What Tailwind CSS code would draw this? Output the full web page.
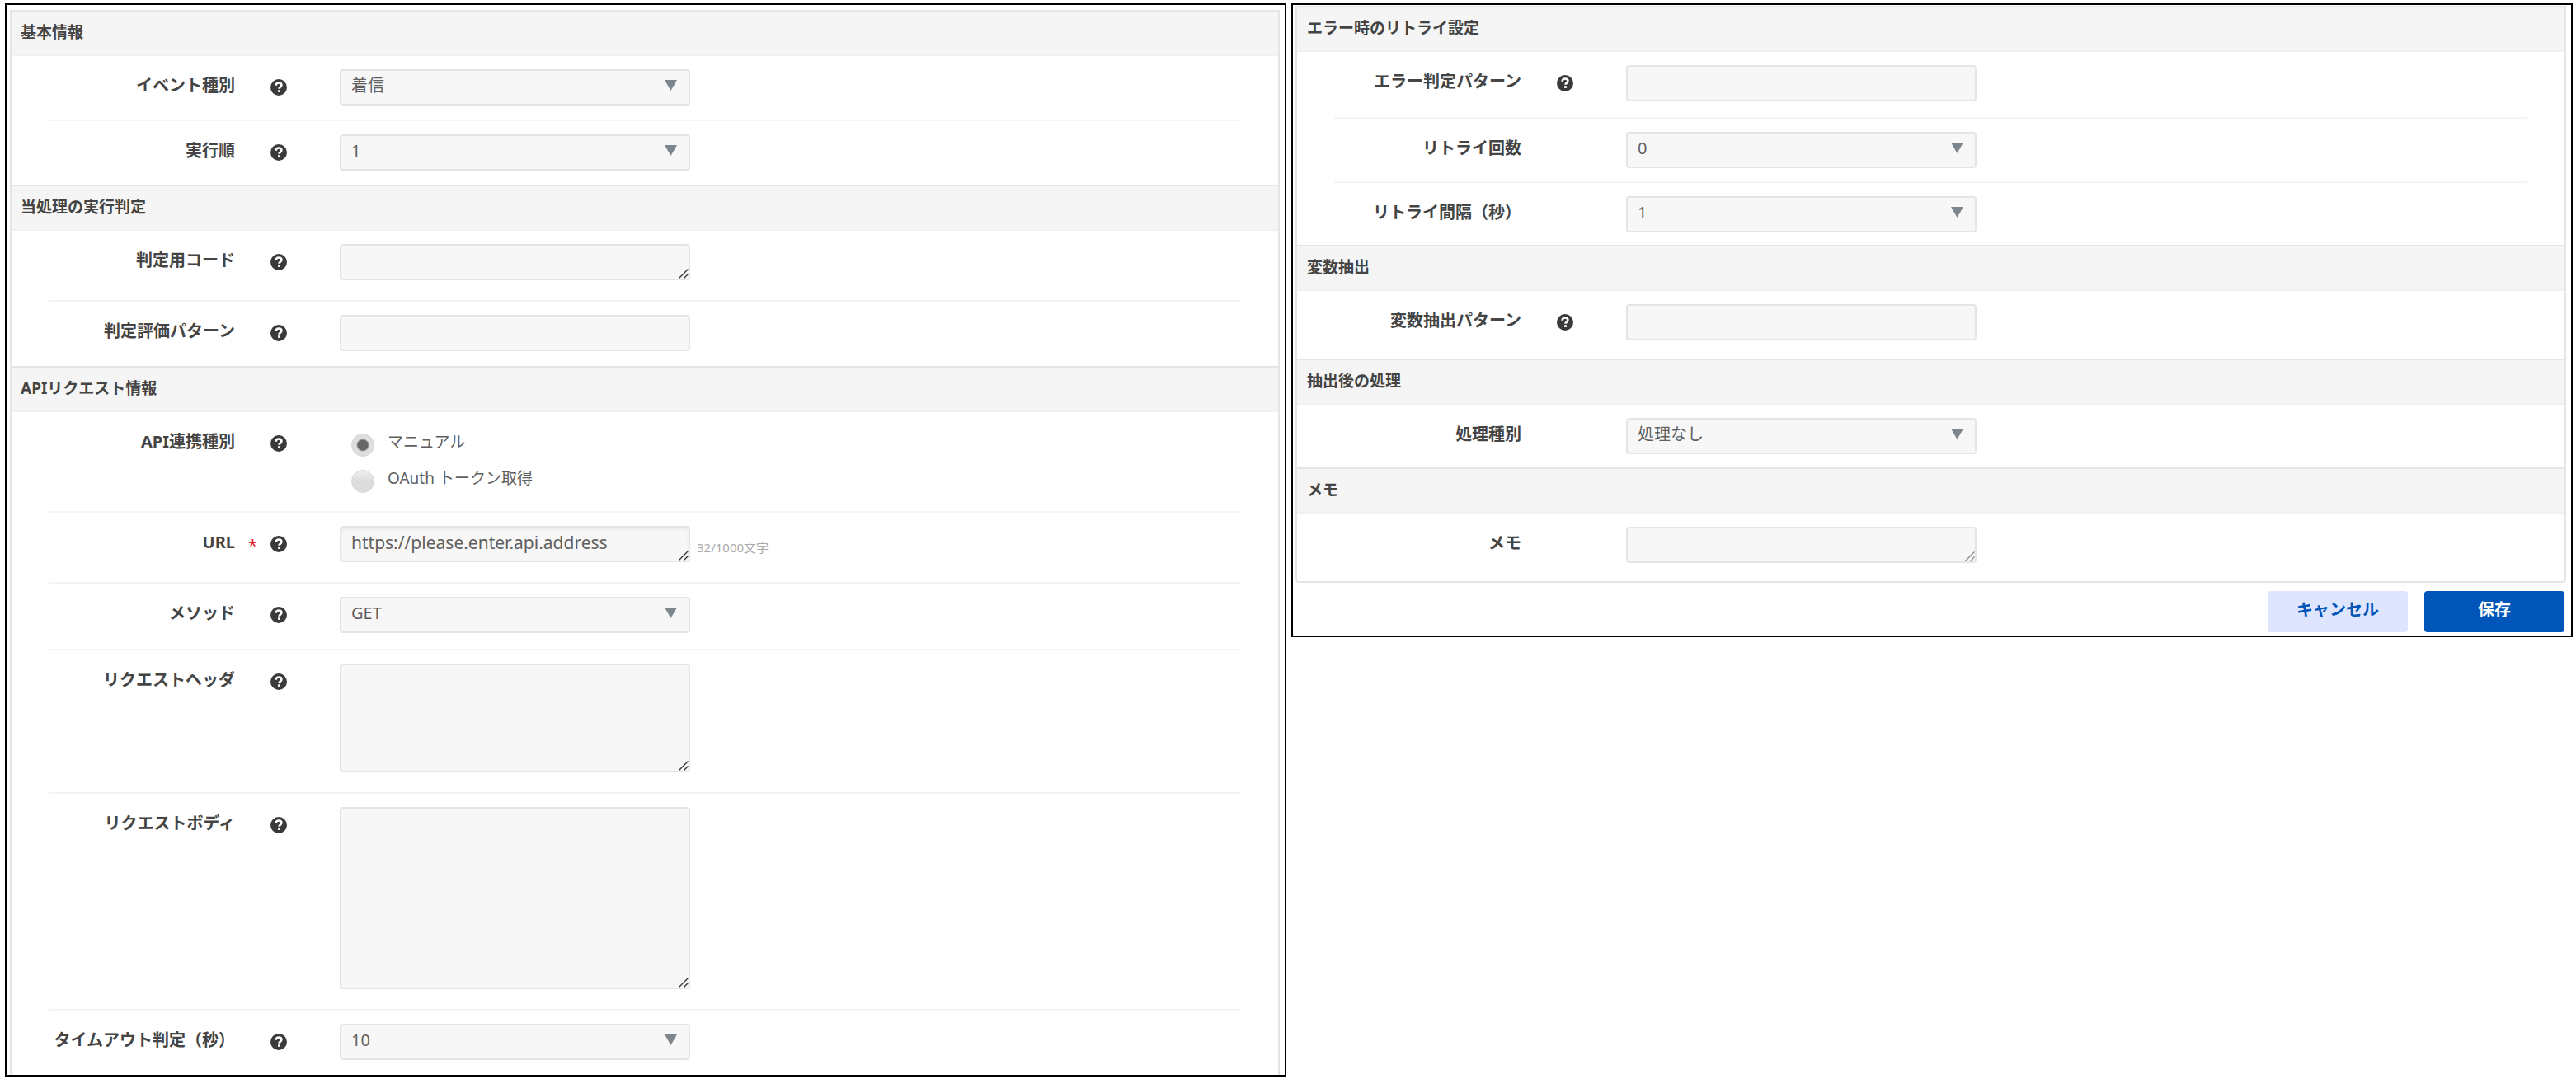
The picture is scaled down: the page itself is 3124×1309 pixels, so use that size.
<!DOCTYPE html>
<html lang="ja">
<head>
    <meta charset="UTF-8">
    <meta name="viewport" content="width=device-width, initial-scale=1.0">
    <title>API連携設定</title>
    <script src="https://cdn.jsdelivr.net/npm/@tailwindcss/browser@4"></script>
</head>
<body class="bg-white font-['Noto_Sans','Noto_Sans_CJK_JP',sans-serif] text-[20px] text-[#5f5f5f]">
    <!-- Shared icons -->
    <svg class="hidden">
        <symbol id="help" viewBox="0 0 20 20">
            <circle cx="10" cy="10" r="10" fill="#3a3a3a"/>
            <path d="M6.600 7.800C6.700 5.500 8.100 4.500 10.100 4.500c2 0 3.300 1.100 3.300 2.800 0 2.300-2.900 2.300-2.900 4.500" fill="none" stroke="#fff" stroke-width="2.600"/>
            <rect x="9.100" y="13.200" width="2.800" height="2.700" fill="#fff"/>
        </symbol>
        <symbol id="arrow" viewBox="0 0 15 13">
            <path d="M0 0h15L7.500 13z" fill="#7d868c"/>
        </symbol>
        <symbol id="grip" viewBox="0 0 12 12">
            <path d="M.5 11.500l11-11M6.500 11.500l5-5" fill="none" stroke="currentColor" stroke-width="1.400"/>
        </symbol>
    </svg>

    <form class="grid grid-cols-2 items-start gap-1.5 pt-1 pr-1 pl-1.5">
        <!-- Left panel -->
        <div class="border-2 border-black pt-1.5 pr-1.5 pl-1">
            <div class="border-x-2 border-[#e5e5e5]">
                <section>
                    <h2 class="h-14 border-y-2 border-t-[#e5e5e5] border-b-[#f1f1f1] bg-[#f5f5f5] pl-[11px] text-[19px] leading-[50px] font-bold text-[#444]">基本情報</h2>
                    <div class="mx-[45px] flex items-start border-b-2 border-[#f4f4f4] pt-4 pb-[17px]">
                        <label for="eventType" class="w-[226px] text-right leading-10 font-bold text-[#444]">イベント種別</label>
                        <div class="flex h-11 w-[63px] items-center justify-end">
                            <button type="button" aria-label="イベント種別のヘルプ"><svg class="size-5"><use href="#help"/></svg></button>
                        </div>
                        <div class="relative ml-16 w-[425px]">
                            <select id="eventType" class="block h-11 w-full appearance-none rounded border-2 border-[#e5e5e5] bg-[#f7f7f7] px-3 pb-1"><option>着信</option></select>
                            <svg class="pointer-events-none absolute top-[13px] right-4 h-[13px] w-[15px]"><use href="#arrow"/></svg>
                        </div>
                    </div>
                    <div class="mx-[45px] flex items-start pt-4 pb-[17px]">
                        <label for="order" class="w-[226px] text-right leading-10 font-bold text-[#444]">実行順</label>
                        <div class="flex h-11 w-[63px] items-center justify-end">
                            <button type="button" aria-label="実行順のヘルプ"><svg class="size-5"><use href="#help"/></svg></button>
                        </div>
                        <div class="relative ml-16 w-[425px]">
                            <select id="order" class="block h-11 w-full appearance-none rounded border-2 border-[#e5e5e5] bg-[#f7f7f7] px-3 pb-1"><option>1</option></select>
                            <svg class="pointer-events-none absolute top-[13px] right-4 h-[13px] w-[15px]"><use href="#arrow"/></svg>
                        </div>
                    </div>
                </section>

                <section>
                    <h2 class="h-14 border-y-2 border-t-[#e5e5e5] border-b-[#f1f1f1] bg-[#f5f5f5] pl-[11px] text-[19px] leading-[50px] font-bold text-[#444]">当処理の実行判定</h2>
                    <div class="mx-[45px] flex items-start border-b-2 border-[#f4f4f4] pt-4 pb-6">
                        <label for="judgeCode" class="w-[226px] text-right leading-10 font-bold text-[#444]">判定用コード</label>
                        <div class="flex h-11 w-[63px] items-center justify-end">
                            <button type="button" aria-label="判定用コードのヘルプ"><svg class="size-5"><use href="#help"/></svg></button>
                        </div>
                        <div class="relative ml-16 w-[425px]">
                            <textarea id="judgeCode" class="block h-11 w-full resize-none rounded border-2 border-[#e5e5e5] bg-[#f7f7f7] px-3 leading-9"></textarea>
                            <svg class="pointer-events-none absolute right-0.5 bottom-0.5 size-3 text-[#333]"><use href="#grip"/></svg>
                        </div>
                    </div>
                    <div class="mx-[45px] flex items-start pt-4 pb-[18px]">
                        <label for="judgePattern" class="w-[226px] text-right leading-10 font-bold text-[#444]">判定評価パターン</label>
                        <div class="flex h-11 w-[63px] items-center justify-end">
                            <button type="button" aria-label="判定評価パターンのヘルプ"><svg class="size-5"><use href="#help"/></svg></button>
                        </div>
                        <input id="judgePattern" type="text" class="ml-16 h-11 w-[425px] rounded border-2 border-[#e5e5e5] bg-[#f7f7f7] px-3">
                    </div>
                </section>

                <section>
                    <h2 class="h-14 border-y-2 border-t-[#e5e5e5] border-b-[#f1f1f1] bg-[#f5f5f5] pl-[11px] text-[19px] leading-[50px] font-bold text-[#444]">APIリクエスト情報</h2>
                    <div role="radiogroup" aria-labelledby="apiType" class="mx-[45px] flex items-start border-b-2 border-[#f4f4f4] pt-4 pb-4">
                        <span id="apiType" class="w-[226px] text-right leading-10 font-bold text-[#444]">API連携種別</span>
                        <div class="flex h-11 w-[63px] items-center justify-end">
                            <button type="button" aria-label="API連携種別のヘルプ"><svg class="size-5"><use href="#help"/></svg></button>
                        </div>
                        <div class="ml-16 pt-2 pb-1 pl-3.5 text-[19px]">
                            <label class="flex h-11 items-start gap-4 leading-6">
                                <input type="radio" name="apiType" checked class="mt-0.5 size-7 appearance-none rounded-full border border-[#d6d6d6] bg-linear-to-b from-[#efefef] to-[#d9d9d9] checked:bg-[radial-gradient(circle,#666_0_6px,#dedede_8px)]">
                                マニュアル
                            </label>
                            <label class="flex h-8 items-start gap-4 leading-6">
                                <input type="radio" name="apiType" class="mt-0.5 size-7 appearance-none rounded-full border border-[#d6d6d6] bg-linear-to-b from-[#efefef] to-[#dcdcdc] to-50% checked:bg-[radial-gradient(circle,#666_0_6px,#dedede_8px)]">
                                OAuth トークン取得
                            </label>
                        </div>
                    </div>
                    <div class="mx-[45px] flex items-start border-b-2 border-[#f4f4f4] pt-4 pb-6">
                        <label for="url" class="w-[226px] text-right leading-10 font-bold text-[#444]">URL</label>
                        <div class="flex h-11 w-[63px] items-center justify-between pl-4">
                            <span class="pt-1 text-[#e8202a]">*</span>
                            <button type="button" aria-label="URLのヘルプ"><svg class="size-5"><use href="#help"/></svg></button>
                        </div>
                        <div class="relative ml-16 w-[425px]">
                            <textarea id="url" required class="block h-11 w-full resize-none overflow-hidden rounded border-2 border-[#e5e5e5] bg-[#f7f7f7] px-3 text-[21px] leading-9 inset-shadow-sm">https://please.enter.api.address</textarea>
                            <svg class="pointer-events-none absolute right-0.5 bottom-0.5 size-3 text-[#333]"><use href="#grip"/></svg>
                        </div>
                        <span class="ml-2 pt-4 text-[15px] leading-5 text-[#aaa]">32/1000文字</span>
                    </div>
                    <div class="mx-[45px] flex items-start border-b-2 border-[#f4f4f4] pt-4 pb-[19px]">
                        <label for="method" class="w-[226px] text-right leading-10 font-bold text-[#444]">メソッド</label>
                        <div class="flex h-11 w-[63px] items-center justify-end">
                            <button type="button" aria-label="メソッドのヘルプ"><svg class="size-5"><use href="#help"/></svg></button>
                        </div>
                        <div class="relative ml-16 w-[425px]">
                            <select id="method" class="block h-11 w-full appearance-none rounded border-2 border-[#e5e5e5] bg-[#f7f7f7] px-3 pb-1"><option>GET</option></select>
                            <svg class="pointer-events-none absolute top-[13px] right-4 h-[13px] w-[15px]"><use href="#arrow"/></svg>
                        </div>
                    </div>
                    <div class="mx-[45px] flex items-start border-b-2 border-[#f4f4f4] pt-4 pb-6">
                        <label for="reqHeader" class="w-[226px] text-right leading-10 font-bold text-[#444]">リクエストヘッダ</label>
                        <div class="flex h-11 w-[63px] items-center justify-end">
                            <button type="button" aria-label="リクエストヘッダのヘルプ"><svg class="size-5"><use href="#help"/></svg></button>
                        </div>
                        <div class="relative ml-16 w-[425px]">
                            <textarea id="reqHeader" class="block h-[132px] w-full resize-none rounded border-2 border-[#e5e5e5] bg-[#f7f7f7] px-3 leading-9"></textarea>
                            <svg class="pointer-events-none absolute right-0.5 bottom-0.5 size-3 text-[#333]"><use href="#grip"/></svg>
                        </div>
                    </div>
                    <div class="mx-[45px] flex items-start border-b-2 border-[#f4f4f4] pt-4 pb-6">
                        <label for="reqBody" class="w-[226px] text-right leading-10 font-bold text-[#444]">リクエストボディ</label>
                        <div class="flex h-11 w-[63px] items-center justify-end">
                            <button type="button" aria-label="リクエストボディのヘルプ"><svg class="size-5"><use href="#help"/></svg></button>
                        </div>
                        <div class="relative ml-16 w-[425px]">
                            <textarea id="reqBody" class="block h-[221px] w-full resize-none rounded border-2 border-[#e5e5e5] bg-[#f7f7f7] px-3 leading-9"></textarea>
                            <svg class="pointer-events-none absolute right-0.5 bottom-0.5 size-3 text-[#333]"><use href="#grip"/></svg>
                        </div>
                    </div>
                    <div class="mx-[45px] flex items-start pt-4 pb-[18px]">
                        <label for="timeout" class="w-[226px] text-right leading-10 font-bold text-[#444]">タイムアウト判定（秒）</label>
                        <div class="flex h-11 w-[63px] items-center justify-end">
                            <button type="button" aria-label="タイムアウト判定のヘルプ"><svg class="size-5"><use href="#help"/></svg></button>
                        </div>
                        <div class="relative ml-16 w-[425px]">
                            <select id="timeout" class="block h-11 w-full appearance-none rounded border-2 border-[#e5e5e5] bg-[#f7f7f7] px-3 pb-1"><option>10</option></select>
                            <svg class="pointer-events-none absolute top-[13px] right-4 h-[13px] w-[15px]"><use href="#arrow"/></svg>
                        </div>
                    </div>
                </section>
            </div>
        </div>

        <!-- Right panel -->
        <div class="border-2 border-black pt-px pr-1.5 pb-1 pl-[3px]">
            <div class="rounded-b border-2 border-t-0 border-[#e5e5e5]">
                <section>
                    <h2 class="h-14 border-y-2 border-t-[#e5e5e5] border-b-[#f1f1f1] bg-[#f5f5f5] pl-3 text-[19px] leading-[50px] font-bold text-[#444]">エラー時のリトライ設定</h2>
                    <div class="mx-[45px] flex items-start border-b-2 border-[#f4f4f4] pt-4 pb-[19px]">
                        <label for="errorPattern" class="w-[227px] text-right leading-10 font-bold text-[#444]">エラー判定パターン</label>
                        <div class="flex h-11 w-[63px] items-center justify-end">
                            <button type="button" aria-label="エラー判定パターンのヘルプ"><svg class="size-5"><use href="#help"/></svg></button>
                        </div>
                        <input id="errorPattern" type="text" class="ml-16 h-11 w-[425px] rounded border-2 border-[#e5e5e5] bg-[#f7f7f7] px-3">
                    </div>
                    <div class="mx-[45px] flex items-start border-b-2 border-[#f4f4f4] pt-4 pb-4">
                        <label for="retryCount" class="w-[227px] text-right leading-10 font-bold text-[#444]">リトライ回数</label>
                        <div class="relative ml-[127px] w-[425px]">
                            <select id="retryCount" class="block h-11 w-full appearance-none rounded border-2 border-[#e5e5e5] bg-[#f7f7f7] px-3 pb-1"><option>0</option></select>
                            <svg class="pointer-events-none absolute top-[13px] right-4 h-[13px] w-[15px]"><use href="#arrow"/></svg>
                        </div>
                    </div>
                    <div class="mx-[45px] flex items-start pt-4 pb-[15px]">
                        <label for="retryInterval" class="w-[227px] text-right leading-10 font-bold text-[#444]">リトライ間隔（秒）</label>
                        <div class="relative ml-[127px] w-[425px]">
                            <select id="retryInterval" class="block h-11 w-full appearance-none rounded border-2 border-[#e5e5e5] bg-[#f7f7f7] px-3 pb-1"><option>1</option></select>
                            <svg class="pointer-events-none absolute top-[13px] right-4 h-[13px] w-[15px]"><use href="#arrow"/></svg>
                        </div>
                    </div>
                </section>

                <section>
                    <h2 class="h-14 border-y-2 border-t-[#e5e5e5] border-b-[#f1f1f1] bg-[#f5f5f5] pl-3 text-[19px] leading-[50px] font-bold text-[#444]">変数抽出</h2>
                    <div class="mx-[45px] flex items-start pt-4 pb-[22px]">
                        <label for="varPattern" class="w-[227px] text-right leading-10 font-bold text-[#444]">変数抽出パターン</label>
                        <div class="flex h-11 w-[63px] items-center justify-end">
                            <button type="button" aria-label="変数抽出パターンのヘルプ"><svg class="size-5"><use href="#help"/></svg></button>
                        </div>
                        <input id="varPattern" type="text" class="ml-16 h-11 w-[425px] rounded border-2 border-[#e5e5e5] bg-[#f7f7f7] px-3">
                    </div>
                </section>

                <section>
                    <h2 class="h-14 border-y-2 border-t-[#e5e5e5] border-b-[#f1f1f1] bg-[#f5f5f5] pl-3 text-[19px] leading-[50px] font-bold text-[#444]">抽出後の処理</h2>
                    <div class="mx-[45px] flex items-start pt-4 pb-4">
                        <label for="processType" class="w-[227px] text-right leading-10 font-bold text-[#444]">処理種別</label>
                        <div class="relative ml-[127px] w-[425px]">
                            <select id="processType" class="block h-11 w-full appearance-none rounded border-2 border-[#e5e5e5] bg-[#f7f7f7] px-3 pb-1"><option>処理なし</option></select>
                            <svg class="pointer-events-none absolute top-[13px] right-4 h-[13px] w-[15px]"><use href="#arrow"/></svg>
                        </div>
                    </div>
                </section>

                <section>
                    <h2 class="h-14 border-y-2 border-t-[#e5e5e5] border-b-[#f1f1f1] bg-[#f5f5f5] pl-3 text-[19px] leading-[50px] font-bold text-[#444]">メモ</h2>
                    <div class="mx-[45px] flex items-start pt-4 pb-[22px]">
                        <label for="memo" class="w-[227px] text-right leading-10 font-bold text-[#444]">メモ</label>
                        <div class="relative ml-[127px] w-[425px]">
                            <textarea id="memo" class="block h-11 w-full resize-none rounded border-2 border-[#e5e5e5] bg-[#f7f7f7] px-3 leading-9"></textarea>
                            <svg class="pointer-events-none absolute right-0.5 bottom-0.5 size-3 text-[#888]"><use href="#grip"/></svg>
                        </div>
                    </div>
                </section>
            </div>
            <div class="mt-2.5 flex justify-end gap-5 pr-0.5">
                <button type="button" class="h-[50px] w-[170px] rounded bg-[#dee6ff] pb-1 font-bold text-[#0055b8]">キャンセル</button>
                <button type="submit" class="h-[50px] w-[170px] rounded bg-[#0055b8] pb-1 font-bold text-white">保存</button>
            </div>
        </div>
    </form>
</body>
</html>
